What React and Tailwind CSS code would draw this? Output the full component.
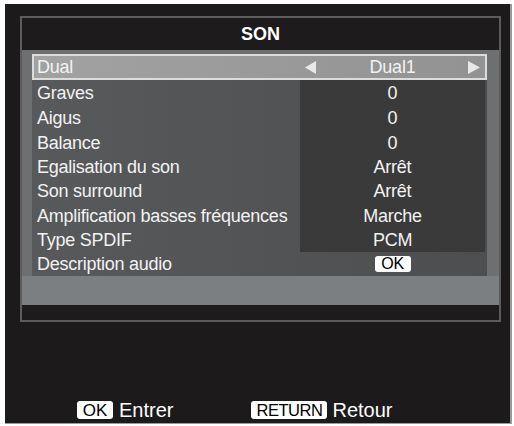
const rows = [
  { label: 'Graves', value: '0', h: 'h-[25px]' },
  { label: 'Aigus', value: '0', h: 'h-[25px]' },
  { label: 'Balance', value: '0', h: 'h-[25px]' },
  { label: 'Egalisation du son', value: 'Arrêt', h: 'h-[24px]' },
  { label: 'Son surround', value: 'Arrêt', h: 'h-[24px]' },
  { label: 'Amplification basses fréquences', value: 'Marche', h: 'h-[25px]' },
  { label: 'Type SPDIF', value: 'PCM', h: 'h-[24px]' },
];

function Arrow({ dir }) {
  return (
    <svg width="12" height="13" viewBox="0 0 12 13">
      {dir === 'left' ? (
        <polygon points="11,0 11,13 0,6.5" fill="#e8e8e8" />
      ) : (
        <polygon points="0,0 0,13 12,6.5" fill="#e8e8e8" />
      )}
    </svg>
  );
}

export default function App() {
  return (
    <div className="w-[514px] h-[426px] bg-white pt-[4px] pl-[5px] font-['Liberation_Sans',Arial,sans-serif]">
      <div className="w-[507px] h-[420px] bg-[#1c1a1a] border-r-2 border-b border-[#9a9a9a] flex flex-col">
        {/* menu panel */}
        <div className="ml-[15px] mt-[12px] w-[481px] h-[306px] border-2 border-[#5c5c5c] flex flex-col">
          <div className="h-[32px] bg-[#1d1b1c] flex items-center justify-center text-white font-bold text-[18px]">
            SON
          </div>
          <div className="h-[255px] bg-[#6d6f71] flex flex-col">
            <div className="pt-[4px] pl-[10px]">
              <div className="w-[455px] bg-[linear-gradient(90deg,#57595b,#4c4e50)] text-[#f2f2f2] text-[18px] tracking-[-0.25px] leading-none">
                {/* selected row */}
                <div className="h-[26px] flex items-center border-2 border-[#dcdcdc] bg-[linear-gradient(90deg,#a2a2a2,#929292)]">
                  <div className="flex-1 pl-[3px]">Dual</div>
                  <div className="w-[185px] h-full flex items-center justify-between pl-[5px] pr-[5px]">
                    <Arrow dir="left" />
                    <span>Dual1</span>
                    <Arrow dir="right" />
                  </div>
                </div>
                {rows.map((r) => (
                  <div key={r.label} className={`${r.h} flex items-center`}>
                    <div className="flex-1 pl-[5px]">{r.label}</div>
                    <div className="w-[185px] mr-[2px] h-full bg-[#3a3a3b] flex items-center justify-center">
                      {r.value}
                    </div>
                  </div>
                ))}
                <div className="h-[24px] flex items-center">
                  <div className="flex-1 pl-[5px]">Description audio</div>
                  <div className="w-[185px] mr-[2px] h-full flex items-center justify-center">
                    <span className="w-[36px] h-[16px] bg-white rounded-[3px] text-black text-[16px] flex items-center justify-center">
                      OK
                    </span>
                  </div>
                </div>
              </div>
            </div>
            <div className="flex-1 bg-[#7b7f81]"></div>
          </div>
          <div className="flex-1 bg-[#1d1b1c]"></div>
        </div>

        {/* footer */}
        <div className="flex-1"></div>
        <div className="flex items-center pl-[72px] pb-[2px] h-[22px] mb-[1px] text-white text-[20px] leading-none">
          <span className="w-[36px] h-[18px] bg-white rounded-[3px] text-black text-[17px] flex items-center justify-center">
            OK
          </span>
          <span className="ml-[6px]">Entrer</span>
          <span className="ml-[78px] w-[76px] h-[18px] bg-white rounded-[3px] text-black text-[16.5px] tracking-[-0.5px] flex items-center justify-center">
            RETURN
          </span>
          <span className="ml-[5px]">Retour</span>
        </div>
      </div>
    </div>
  );
}
